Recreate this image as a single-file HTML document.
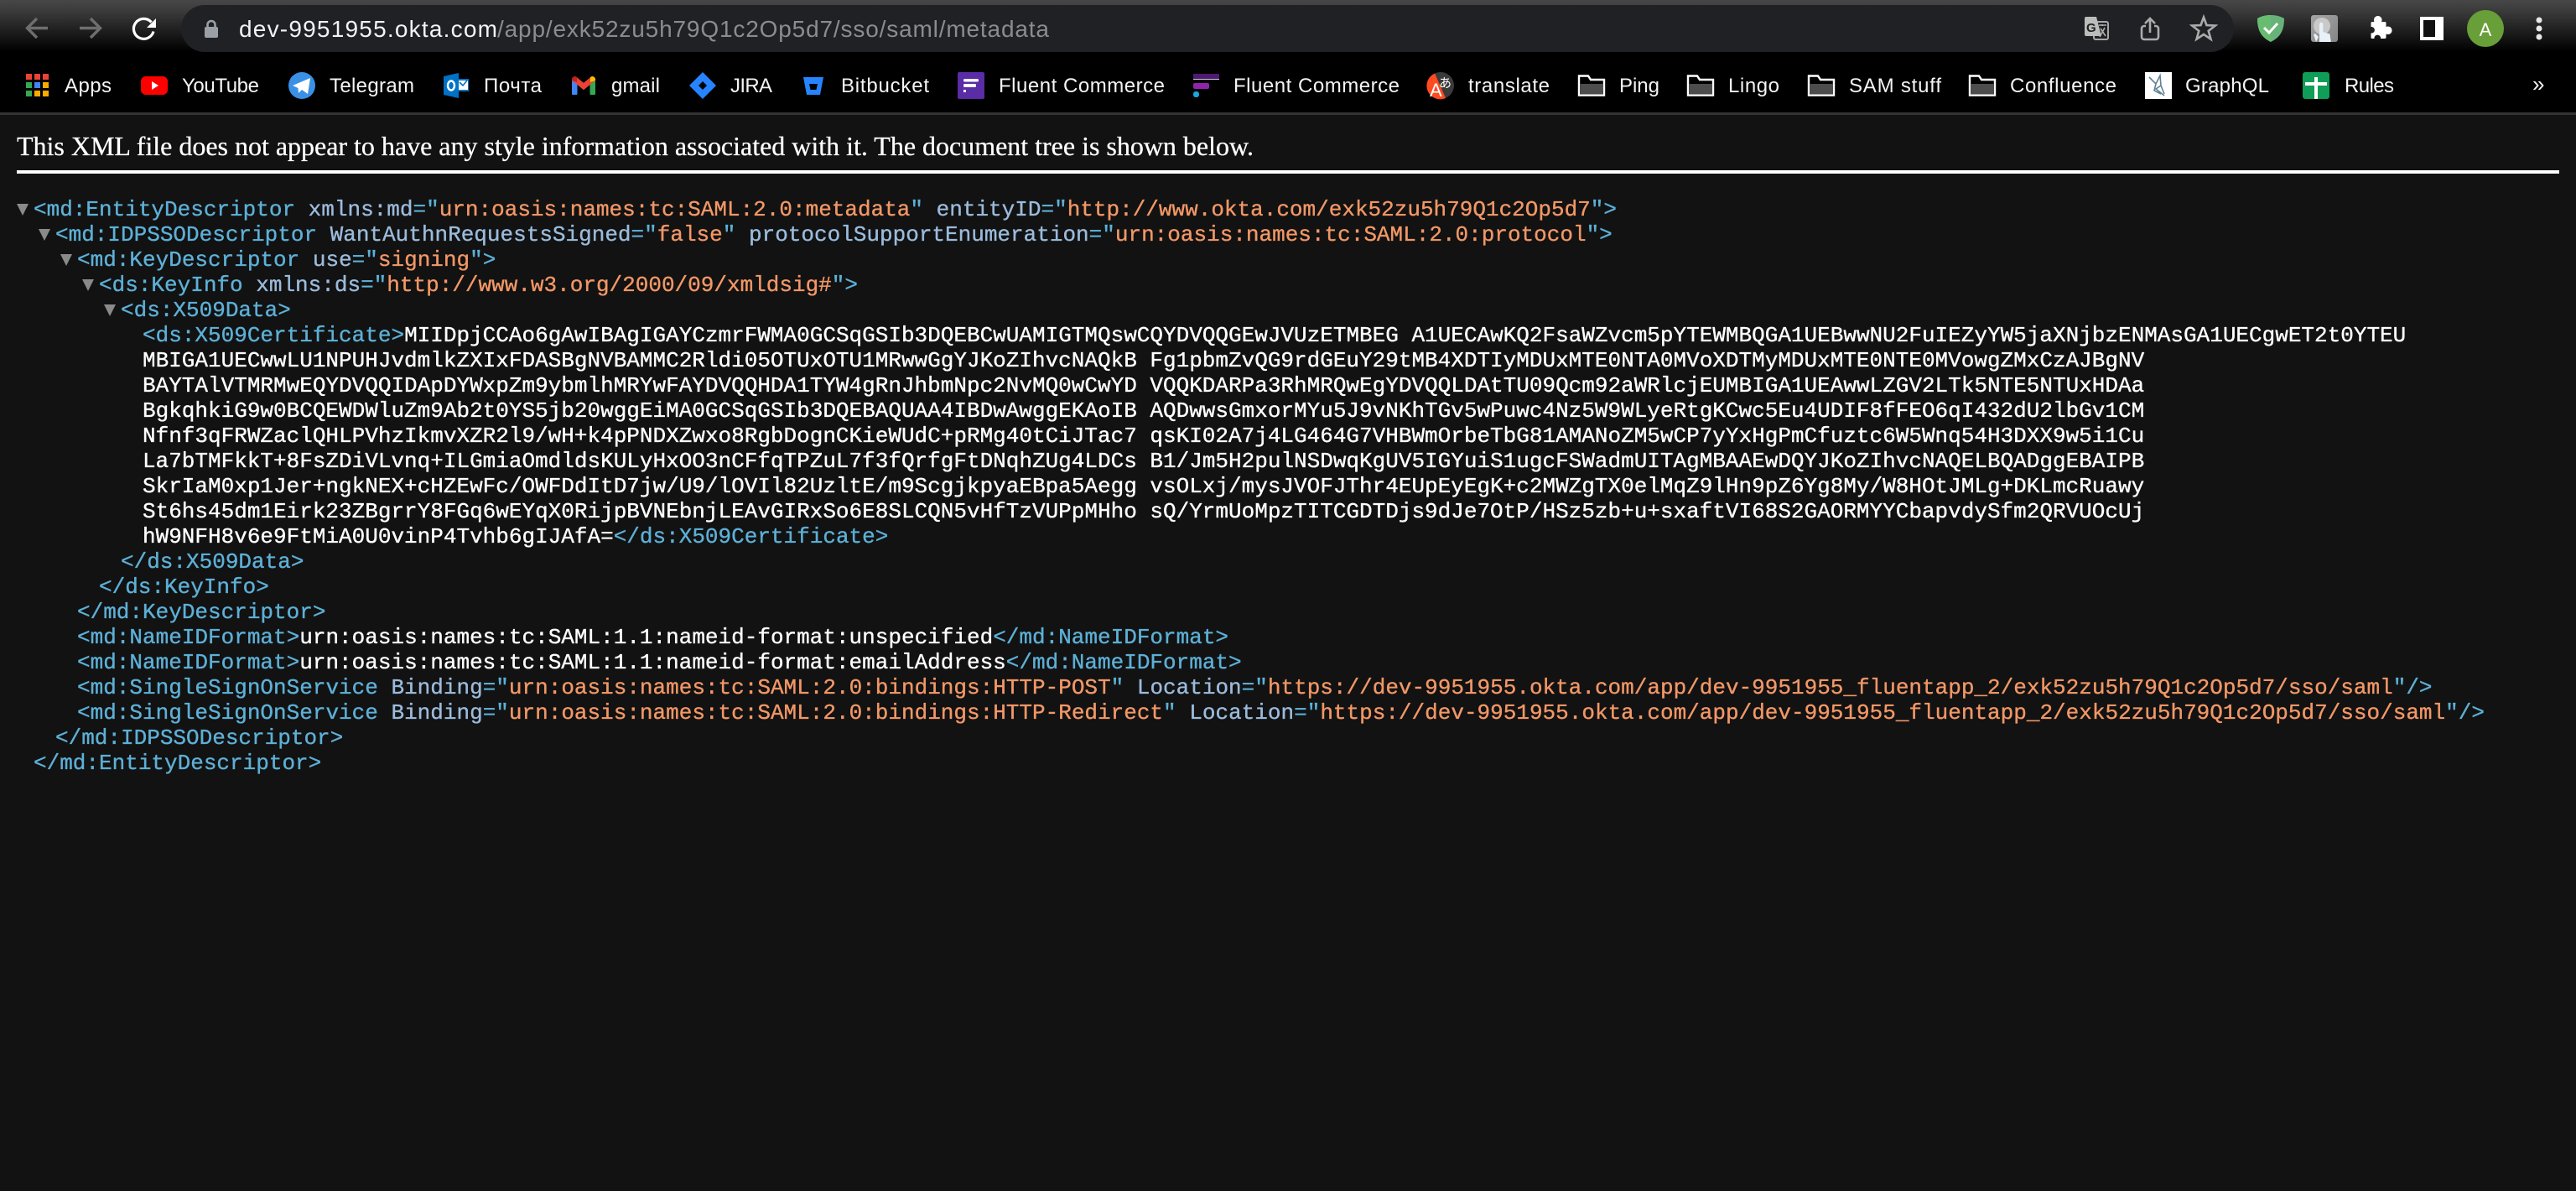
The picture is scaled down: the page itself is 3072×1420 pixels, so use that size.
<!DOCTYPE html>
<html lang="en">
<head>
<meta charset="utf-8">
<title>metadata</title>
<style>
html,body{margin:0;padding:0;width:3072px;height:1420px;overflow:hidden;background:#121212}
#top{position:absolute;left:0;top:0}
.l{position:absolute;margin:0;white-space:pre;font:26px/30px "Liberation Mono",monospace;color:#fff;-webkit-text-stroke:.35px currentColor}
.t{color:#5db0d7}.n{color:#9bbbdc}.v{color:#f29766}
.a{position:absolute;width:0;height:0;border-left:7.5px solid transparent;border-right:7.5px solid transparent;border-top:14px solid #8a8a8a}
#hr{position:absolute;left:20px;top:203px;width:3032px;height:4px;background:#fff}
</style>
</head>
<body>
<svg id="top" width="3072" height="210" viewBox="0 0 3072 210" xmlns="http://www.w3.org/2000/svg">
<defs>
<linearGradient id="g" x1="0" y1="0" x2="0" y2="1"><stop offset="0" stop-color="#474747"/><stop offset=".25" stop-color="#383838"/><stop offset=".65" stop-color="#1a1a1a"/><stop offset="1" stop-color="#000"/></linearGradient>
<linearGradient id="tg" x1="0" y1="0" x2="1" y2="1"><stop offset="0" stop-color="#a5a5a5"/><stop offset="1" stop-color="#858585"/></linearGradient>
</defs>
<rect width="3072" height="62" fill="url(#g)"/>
<rect y="62" width="3072" height="72" fill="#000"/>
<rect y="134" width="3072" height="3" fill="#333"/>
<rect y="137" width="3072" height="73" fill="#121212"/>
<!-- nav -->
<g fill="none" stroke="#6e6e6e" stroke-width="3.4"><path d="M57 33.5H33.5M44 22L32.5 33.5 44 45"/><path d="M95 33.5H119.5M108 22L119.5 33.5 108 45"/></g>
<path d="M183 37.5a12 12 0 1 1-2.5-11" fill="none" stroke="#fff" stroke-width="3.2"/><polygon points="186,22 186,33 175,33" fill="#fff"/>
<!-- omnibox -->
<rect x="216" y="6" width="2448" height="56" rx="28" fill="#202124"/>
<rect x="244" y="32" width="16" height="13" rx="2" fill="#9aa0a6"/><path d="M247.5 33v-3.5a4.5 4.5 0 0 1 9 0V33" fill="none" stroke="#9aa0a6" stroke-width="2.6"/>
<g font-family="'Liberation Sans',sans-serif" font-size="28">
<text x="285" y="44" fill="#f1f3f4" textLength="308">dev-9951955.okta.com</text>
<text x="593" y="44" fill="#8a8c90" textLength="658">/app/exk52zu5h79Q1c2Op5d7/sso/saml/metadata</text>
</g>
<!-- omnibox icons -->
<rect x="2497" y="26" width="17" height="21" rx="2" fill="#202124" stroke="#a8a8a8" stroke-width="2"/>
<path d="M2486 22a2 2 0 0 1 2-2h12l6 23h-18a2 2 0 0 1-2-2z" fill="#bcbcbc"/>
<text x="2488" y="38" font-family="'Liberation Sans',sans-serif" font-size="15" font-weight="bold" fill="#202124">G</text>
<path d="M2503 30h9M2507 29v2M2504 44l6-11M2505 34l6 9" stroke="#b0b0b0" stroke-width="1.6" fill="none"/>
<g fill="none" stroke="#ababab" stroke-width="2.6"><path d="M2559 31h-2a3 3 0 0 0-3 3v10a3 3 0 0 0 3 3h14a3 3 0 0 0 3-3V34a3 3 0 0 0-3-3h-2"/><path d="M2564 39V22M2558 28l6-6 6 6"/></g>
<polygon transform="translate(2628,35)" points="0,-14.5 3.5,-4.9 13.8,-4.5 5.7,1.85 8.5,11.7 0,6 -8.5,11.7 -5.7,1.85 -13.8,-4.5 -3.5,-4.9" fill="none" stroke="#ababab" stroke-width="2.6"/>
<!-- extensions -->
<path d="M2708 18C2698 18 2692 22 2692 22C2692 38 2698 45 2708 50C2718 45 2724 38 2724 22C2724 22 2718 18 2708 18Z" fill="#67b279"/>
<path d="M2708 18C2698 18 2692 22 2692 22C2692 38 2698 45 2708 50Z" fill="#68bc71"/>
<path d="M2700 33l6 6 10-11" fill="none" stroke="#fff" stroke-width="3"/>
<rect x="2756" y="18" width="32" height="32" rx="3" fill="url(#tg)"/>
<circle cx="2769" cy="31" r="10" fill="#c9c9c9"/>
<path d="M2766 50V29a2.2 2.2 0 0 1 4.4 0v9l8 2.5 1.5 9.500ZM2762 50l-3-9 2-1 4 4z" fill="#e8f0f8"/>
<path d="M2829 26h2.500a4.800 4.800 0 1 1 8.500 0h4a1.500 1.500 0 0 1 1.500 1.500v4.500a4.800 4.800 0 1 1 0 8.500v4a1.500 1.500 0 0 1-1.500 1.500h-5a3.800 3.800 0 1 0-7.500 0h-2.500a1.500 1.500 0 0 1-1.500-1.500v-5a3.800 3.800 0 1 0 0-7.500v-4.500a1.500 1.500 0 0 1 1.500-1.500z" fill="#fff"/>
<rect x="2886" y="20" width="28" height="28" fill="#fff"/><rect x="2890" y="24" width="14" height="20" fill="#111"/>
<circle cx="2964" cy="34" r="22" fill="#689f38"/>
<text x="2964" y="43" text-anchor="middle" font-family="'Liberation Sans',sans-serif" font-size="22" fill="#fff">A</text>
<g fill="#e8e8e8"><circle cx="3028" cy="24" r="3.5"/><circle cx="3028" cy="34" r="3.5"/><circle cx="3028" cy="44" r="3.5"/></g>
<!-- bookmark icons -->
<g><rect x="31" y="88" width="7" height="7" fill="#ea4335"/><rect x="41" y="88" width="7" height="7" fill="#ea4335"/><rect x="51" y="88" width="7" height="7" fill="#ea4335"/><rect x="31" y="98" width="7" height="7" fill="#34a853"/><rect x="41" y="98" width="7" height="7" fill="#4285f4"/><rect x="51" y="98" width="7" height="7" fill="#f9ab00"/><rect x="31" y="108" width="7" height="7" fill="#34a853"/><rect x="41" y="108" width="7" height="7" fill="#f9ab00"/><rect x="51" y="108" width="7" height="7" fill="#f9ab00"/></g>
<rect x="168" y="91" width="32" height="22" rx="6" fill="#f00"/><polygon points="181,97 181,107 189,102" fill="#fff"/>
<circle cx="360" cy="102" r="16" fill="#3a90e5"/><polygon points="349,102 370,93 367,112 360,107 356,111 355.5,105" fill="#fff"/>
<rect x="546" y="94" width="13" height="15" fill="#0072c6"/><rect x="547" y="96" width="11" height="11" fill="#fff"/><path d="M548 98l4 4 5-6" fill="none" stroke="#0072c6" stroke-width="1.6"/>
<polygon points="529,91 547,87 547,117 529,113" fill="#0072c6"/><ellipse cx="538" cy="102" rx="4" ry="5.5" fill="none" stroke="#fff" stroke-width="2.5"/>
<rect x="682" y="96" width="6.5" height="17" rx="1" fill="#4285f4"/><rect x="703.5" y="96" width="6.5" height="17" rx="1" fill="#34a853"/>
<path d="M685 94l11 9 11-9" fill="none" stroke="#ea4335" stroke-width="6.5"/>
<path d="M682 96a4 4 0 0 1 4-5l2 1v6z" fill="#c5221f"/><path d="M710 96a4 4 0 0 0-4-5l-2 1v6z" fill="#fbbc04"/>
<polygon points="838,86 854,102 838,118 822,102" fill="#2684ff"/><polygon points="838,97 843,102 838,107 833,102" fill="#000"/>
<polygon points="958,92 982,92 978,113 962,113" fill="#2684ff"/><polygon points="965,100 975,100 973.5,107 966.5,107" fill="#000"/>
<rect x="1142" y="86" width="32" height="32" rx="2" fill="#5a2ca6"/><rect x="1149" y="94" width="18" height="3.5" rx="1.5" fill="#fff"/><rect x="1149" y="100" width="15" height="4" rx="1.5" fill="#fff"/><rect x="1149" y="107" width="3" height="3" fill="#fff"/>
<rect x="1423" y="88" width="31" height="6" fill="#4f1a75"/><rect x="1423" y="94" width="31" height="1" fill="#ccc"/><rect x="1423" y="99" width="19" height="7" rx="2" fill="#8e24aa"/><rect x="1423" y="109" width="7" height="7" rx="3" fill="#1aa7e0"/>
<circle cx="1718" cy="102" r="16" fill="#3a3a3a"/><path d="M1711 87.500A16 16 0 0 0 1724 117Z" fill="#ff4a20"/>
<text x="1705" y="115" font-family="'Liberation Sans',sans-serif" font-size="22" fill="#fff">A</text><text x="1716" y="104" font-family="'Noto Sans CJK JP',sans-serif" font-size="15" fill="#fff">あ</text>
<g fill="#000" stroke="#fff" stroke-width="2.4"><path d="M1883 90.500h11l3 4.500h16v18.500h-30z"/><rect x="1884" y="100" width="28" height="12.500" fill="#4d4d4d" stroke="none"/></g>
<g fill="#000" stroke="#fff" stroke-width="2.4"><path d="M2013 90.500h11l3 4.500h16v18.500h-30z"/><rect x="2014" y="100" width="28" height="12.500" fill="#4d4d4d" stroke="none"/></g>
<g fill="#000" stroke="#fff" stroke-width="2.4"><path d="M2157 90.500h11l3 4.500h16v18.500h-30z"/><rect x="2158" y="100" width="28" height="12.500" fill="#4d4d4d" stroke="none"/></g>
<g fill="#000" stroke="#fff" stroke-width="2.4"><path d="M2349 90.500h11l3 4.500h16v18.500h-30z"/><rect x="2350" y="100" width="28" height="12.500" fill="#4d4d4d" stroke="none"/></g>
<rect x="2558" y="86" width="32" height="32" fill="#fff"/><path d="M2563 92l8 8 5-10 1 12-6 4 10 8M2571 100l-2 8 8 4M2577 102l4 10" fill="none" stroke="#5f8294" stroke-width="1.6"/>
<rect x="2746" y="86" width="32" height="32" rx="3" fill="#0f9d58"/><rect x="2760" y="92" width="4" height="26" fill="#fff"/><rect x="2749" y="98" width="26" height="4" fill="#fff"/>
<!-- bookmark labels -->
<g font-family="'Liberation Sans',sans-serif" font-size="24" fill="#f4f4f4">
<text x="77" y="110" textLength="56">Apps</text>
<text x="217" y="110" textLength="92">YouTube</text>
<text x="393" y="110" textLength="101">Telegram</text>
<text x="577" y="110" textLength="69">Почта</text>
<text x="729" y="110" textLength="58">gmail</text>
<text x="871" y="110" textLength="50">JIRA</text>
<text x="1003" y="110" textLength="105">Bitbucket</text>
<text x="1191" y="110" textLength="198">Fluent Commerce</text>
<text x="1471" y="110" textLength="198">Fluent Commerce</text>
<text x="1751" y="110" textLength="97">translate</text>
<text x="1931" y="110" textLength="48">Ping</text>
<text x="2061" y="110" textLength="61">Lingo</text>
<text x="2205" y="110" textLength="110">SAM stuff</text>
<text x="2397" y="110" textLength="127">Confluence</text>
<text x="2606" y="110" textLength="100">GraphQL</text>
<text x="2796" y="110" textLength="59">Rules</text>
<text x="3020" y="109" font-size="26">»</text>
</g>
<text x="20" y="185" font-family="'Liberation Serif',serif" font-size="32" fill="#fff" stroke="#fff" stroke-width=".25" textLength="1475">This XML file does not appear to have any style information associated with it. The document tree is shown below.</text>
</svg>
<div id="hr"></div>
<i class="a" style="left:20px;top:243px"></i>
<i class="a" style="left:46px;top:273px"></i>
<i class="a" style="left:72px;top:303px"></i>
<i class="a" style="left:98px;top:333px"></i>
<i class="a" style="left:124px;top:363px"></i>
<pre class="l" style="left:40px;top:235px"><span class="t">&lt;md:EntityDescriptor</span> <span class="n">xmlns:md</span><span class="t">="</span><span class="v">urn:oasis:names:tc:SAML:2.0:metadata</span><span class="t">"</span> <span class="n">entityID</span><span class="t">="</span><span class="v">http://www.okta.com/exk52zu5h79Q1c2Op5d7</span><span class="t">"&gt;</span></pre>
<pre class="l" style="left:66px;top:265px"><span class="t">&lt;md:IDPSSODescriptor</span> <span class="n">WantAuthnRequestsSigned</span><span class="t">="</span><span class="v">false</span><span class="t">"</span> <span class="n">protocolSupportEnumeration</span><span class="t">="</span><span class="v">urn:oasis:names:tc:SAML:2.0:protocol</span><span class="t">"&gt;</span></pre>
<pre class="l" style="left:92px;top:295px"><span class="t">&lt;md:KeyDescriptor</span> <span class="n">use</span><span class="t">="</span><span class="v">signing</span><span class="t">"&gt;</span></pre>
<pre class="l" style="left:118px;top:325px"><span class="t">&lt;ds:KeyInfo</span> <span class="n">xmlns:ds</span><span class="t">="</span><span class="v">http://www.w3.org/2000/09/xmldsig#</span><span class="t">"&gt;</span></pre>
<pre class="l" style="left:144px;top:355px"><span class="t">&lt;ds:X509Data&gt;</span></pre>
<pre class="l" style="left:170px;top:385px"><span class="t">&lt;ds:X509Certificate&gt;</span>MIIDpjCCAo6gAwIBAgIGAYCzmrFWMA0GCSqGSIb3DQEBCwUAMIGTMQswCQYDVQQGEwJVUzETMBEG A1UECAwKQ2FsaWZvcm5pYTEWMBQGA1UEBwwNU2FuIEZyYW5jaXNjbzENMAsGA1UECgwET2t0YTEU</pre>
<pre class="l" style="left:170px;top:415px">MBIGA1UECwwLU1NPUHJvdmlkZXIxFDASBgNVBAMMC2Rldi05OTUxOTU1MRwwGgYJKoZIhvcNAQkB Fg1pbmZvQG9rdGEuY29tMB4XDTIyMDUxMTE0NTA0MVoXDTMyMDUxMTE0NTE0MVowgZMxCzAJBgNV</pre>
<pre class="l" style="left:170px;top:445px">BAYTAlVTMRMwEQYDVQQIDApDYWxpZm9ybmlhMRYwFAYDVQQHDA1TYW4gRnJhbmNpc2NvMQ0wCwYD VQQKDARPa3RhMRQwEgYDVQQLDAtTU09Qcm92aWRlcjEUMBIGA1UEAwwLZGV2LTk5NTE5NTUxHDAa</pre>
<pre class="l" style="left:170px;top:475px">BgkqhkiG9w0BCQEWDWluZm9Ab2t0YS5jb20wggEiMA0GCSqGSIb3DQEBAQUAA4IBDwAwggEKAoIB AQDwwsGmxorMYu5J9vNKhTGv5wPuwc4Nz5W9WLyeRtgKCwc5Eu4UDIF8fFEO6qI432dU2lbGv1CM</pre>
<pre class="l" style="left:170px;top:505px">Nfnf3qFRWZaclQHLPVhzIkmvXZR2l9/wH+k4pPNDXZwxo8RgbDognCKieWUdC+pRMg40tCiJTac7 qsKI02A7j4LG464G7VHBWmOrbeTbG81AMANoZM5wCP7yYxHgPmCfuztc6W5Wnq54H3DXX9w5i1Cu</pre>
<pre class="l" style="left:170px;top:535px">La7bTMFkkT+8FsZDiVLvnq+ILGmiaOmdldsKULyHxOO3nCFfqTPZuL7f3fQrfgFtDNqhZUg4LDCs B1/Jm5H2pulNSDwqKgUV5IGYuiS1ugcFSWadmUITAgMBAAEwDQYJKoZIhvcNAQELBQADggEBAIPB</pre>
<pre class="l" style="left:170px;top:565px">SkrIaM0xp1Jer+ngkNEX+cHZEwFc/OWFDdItD7jw/U9/lOVIl82UzltE/m9ScgjkpyaEBpa5Aegg vsOLxj/mysJVOFJThr4EUpEyEgK+c2MWZgTX0elMqZ9lHn9pZ6Yg8My/W8HOtJMLg+DKLmcRuawy</pre>
<pre class="l" style="left:170px;top:595px">St6hs45dm1Eirk23ZBgrrY8FGq6wEYqX0RijpBVNEbnjLEAvGIRxSo6E8SLCQN5vHfTzVUPpMHho sQ/YrmUoMpzTITCGDTDjs9dJe7OtP/HSz5zb+u+sxaftVI68S2GAORMYYCbapvdySfm2QRVUOcUj</pre>
<pre class="l" style="left:170px;top:625px">hW9NFH8v6e9FtMiA0U0vinP4Tvhb6gIJAfA=<span class="t">&lt;/ds:X509Certificate&gt;</span></pre>
<pre class="l" style="left:144px;top:655px"><span class="t">&lt;/ds:X509Data&gt;</span></pre>
<pre class="l" style="left:118px;top:685px"><span class="t">&lt;/ds:KeyInfo&gt;</span></pre>
<pre class="l" style="left:92px;top:715px"><span class="t">&lt;/md:KeyDescriptor&gt;</span></pre>
<pre class="l" style="left:92px;top:745px"><span class="t">&lt;md:NameIDFormat&gt;</span>urn:oasis:names:tc:SAML:1.1:nameid-format:unspecified<span class="t">&lt;/md:NameIDFormat&gt;</span></pre>
<pre class="l" style="left:92px;top:775px"><span class="t">&lt;md:NameIDFormat&gt;</span>urn:oasis:names:tc:SAML:1.1:nameid-format:emailAddress<span class="t">&lt;/md:NameIDFormat&gt;</span></pre>
<pre class="l" style="left:92px;top:805px"><span class="t">&lt;md:SingleSignOnService</span> <span class="n">Binding</span><span class="t">="</span><span class="v">urn:oasis:names:tc:SAML:2.0:bindings:HTTP-POST</span><span class="t">"</span> <span class="n">Location</span><span class="t">="</span><span class="v">https://dev-9951955.okta.com/app/dev-9951955_fluentapp_2/exk52zu5h79Q1c2Op5d7/sso/saml</span><span class="t">"/&gt;</span></pre>
<pre class="l" style="left:92px;top:835px"><span class="t">&lt;md:SingleSignOnService</span> <span class="n">Binding</span><span class="t">="</span><span class="v">urn:oasis:names:tc:SAML:2.0:bindings:HTTP-Redirect</span><span class="t">"</span> <span class="n">Location</span><span class="t">="</span><span class="v">https://dev-9951955.okta.com/app/dev-9951955_fluentapp_2/exk52zu5h79Q1c2Op5d7/sso/saml</span><span class="t">"/&gt;</span></pre>
<pre class="l" style="left:66px;top:865px"><span class="t">&lt;/md:IDPSSODescriptor&gt;</span></pre>
<pre class="l" style="left:40px;top:895px"><span class="t">&lt;/md:EntityDescriptor&gt;</span></pre>
</body>
</html>
